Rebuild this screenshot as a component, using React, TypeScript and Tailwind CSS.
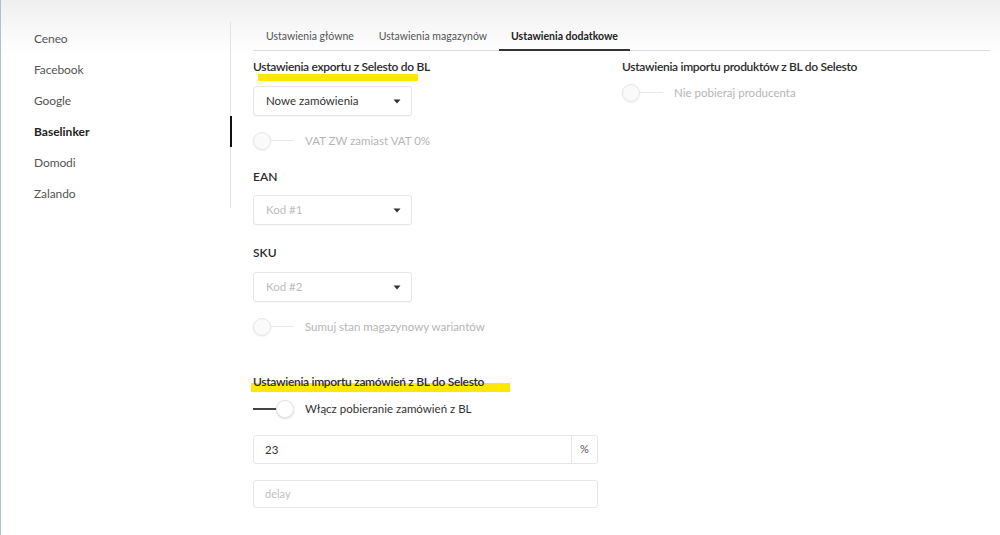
import React from "react";

const font = { fontFamily: "Lato, 'Open Sans', sans-serif" };

function Caret() {
  return (
    <svg width="8" height="5" viewBox="0 0 8 5" className="shrink-0">
      <path d="M0.5 0.5 L7.5 0.5 L4 4.5 Z" fill="#333" />
    </svg>
  );
}

function Select({ value, placeholder }: { value: string; placeholder?: boolean }) {
  return (
    <div className="flex h-[30px] w-[159px] items-center justify-between rounded-[3px] border border-[#e6e6e6] bg-white pl-[12px] pr-[10px] shadow-[0_1px_1px_rgba(0,0,0,0.03)]">
      <span className={placeholder ? "text-[11.5px] text-[#bdbdbd]" : "text-[11.5px] text-[#333]"}>{value}</span>
      <Caret />
    </div>
  );
}

function Toggle({ on, label }: { on?: boolean; label: string }) {
  return (
    <div className="flex h-[20px] items-center">
      <div className="relative h-[18px] w-[41px]">
        {on ? (
          <>
            <div className="absolute left-0 top-[8px] h-[2px] w-[26px] bg-[#444]" />
            <div className="absolute left-[23px] top-0 h-[18px] w-[18px] rounded-full border border-[#e3e3e3] bg-white shadow-[0_1px_2px_rgba(0,0,0,0.15)]" />
          </>
        ) : (
          <>
            <div className="absolute left-[16px] top-[8px] h-[1px] w-[25px] bg-[#e8e8e8]" />
            <div className="absolute left-0 top-0 h-[18px] w-[18px] rounded-full border border-[#e6e6e6] bg-[#fafafa] shadow-[0_1px_2px_rgba(0,0,0,0.06)]" />
          </>
        )}
      </div>
      <span className={on ? "ml-[11px] text-[11.5px] text-[#333]" : "ml-[11px] text-[11.5px] text-[#b5b5b5]"}>{label}</span>
    </div>
  );
}

function Heading({ children, hl }: { children: React.ReactNode; hl?: string }) {
  return (
    <div className="relative h-[18px] text-[12px] font-semibold leading-[18px] tracking-[-0.3px] text-[#2a2a2a]">
      {hl && <div className={"absolute " + hl + " bg-[#ffe800]"} />}
      <span className="relative">{children}</span>
    </div>
  );
}

export default function App() {
  const side = ["Ceneo", "Facebook", "Google", "Baselinker", "Domodi", "Zalando"];
  return (
    <div
      style={font}
      className="flex h-[535px] w-[1000px] overflow-hidden border-l border-[#a9c2d8] bg-[linear-gradient(to_bottom,#efefef_0px,#f7f7f7_25px,#ffffff_55px)] text-[#333]"
    >
      <aside className="mt-[22px] h-[186px] w-[230px] shrink-0 border-r border-[#e2e2e2]">
        <ul className="flex flex-col pt-[1px]">
          {side.map((s) => (
            <li key={s} className="relative flex h-[31px] items-center pl-[33px]">
              <span className={s === "Baselinker" ? "text-[12px] font-bold text-[#222]" : "text-[12px] tracking-[-0.1px] text-[#555]"}>{s}</span>
              {s === "Baselinker" && <div className="absolute right-[-2px] top-0 h-[31px] w-[2px] bg-[#111]" />}
            </li>
          ))}
        </ul>
      </aside>

      <main className="ml-[22px] mt-[24px] w-[737px] shrink-0">
        <nav className="flex h-[27px] border-b border-[#dcdcdc] text-[10.5px]">
          <div className="flex items-center px-[13px] text-[#555]">Ustawienia główne</div>
          <div className="flex items-center px-[12px] text-[#555]">Ustawienia magazynów</div>
          <div className="-mb-px flex items-center border-b-2 border-[#333] px-[12px] font-bold text-[#222]">
            Ustawienia dodatkowe
          </div>
        </nav>

        <div className="flex gap-[24px] pt-[7px]">
          <section className="flex w-[345px] shrink-0 flex-col">
            <Heading hl="left-[5px] top-[16px] h-[7px] w-[160px]">Ustawienia exportu z Selesto do BL</Heading>
            <div className="mt-[10px]">
              <Select value="Nowe zamówienia" />
            </div>
            <div className="mt-[15px]">
              <Toggle label="VAT ZW zamiast VAT 0%" />
            </div>
            <div className="mt-[17px] text-[12px] font-semibold text-[#2a2a2a]">EAN</div>
            <div className="mt-[9px]">
              <Select value="Kod #1" placeholder />
            </div>
            <div className="mt-[19px] text-[12px] font-semibold text-[#2a2a2a]">SKU</div>
            <div className="mt-[10px]">
              <Select value="Kod #2" placeholder />
            </div>
            <div className="mt-[15px]">
              <Toggle label="Sumuj stan magazynowy wariantów" />
            </div>
            <div className="mt-[36px]">
              <Heading hl="left-[-2px] top-[10px] h-[9px] w-[259px]">Ustawienia importu zamówień z BL do Selesto</Heading>
            </div>
            <div className="mt-[8px]">
              <Toggle on label="Włącz pobieranie zamówień z BL" />
            </div>
            <div className="mt-[16px] flex h-[29px] rounded-[3px] border border-[#e6e6e6] bg-white">
              <div className="flex flex-1 items-center pl-[11px] text-[11.5px] text-[#333]">23</div>
              <div className="flex w-[26px] items-center justify-center border-l border-[#e6e6e6] text-[11px] text-[#555]">%</div>
            </div>
            <div className="mt-[16px] flex h-[28px] items-center rounded-[3px] border border-[#e6e6e6] bg-white pl-[11px] text-[11px] text-[#c0c0c0]">
              delay
            </div>
          </section>

          <section className="flex flex-col">
            <Heading>Ustawienia importu produktów z BL do Selesto</Heading>
            <div className="mt-[7px]">
              <Toggle label="Nie pobieraj producenta" />
            </div>
          </section>
        </div>
      </main>
    </div>
  );
}
